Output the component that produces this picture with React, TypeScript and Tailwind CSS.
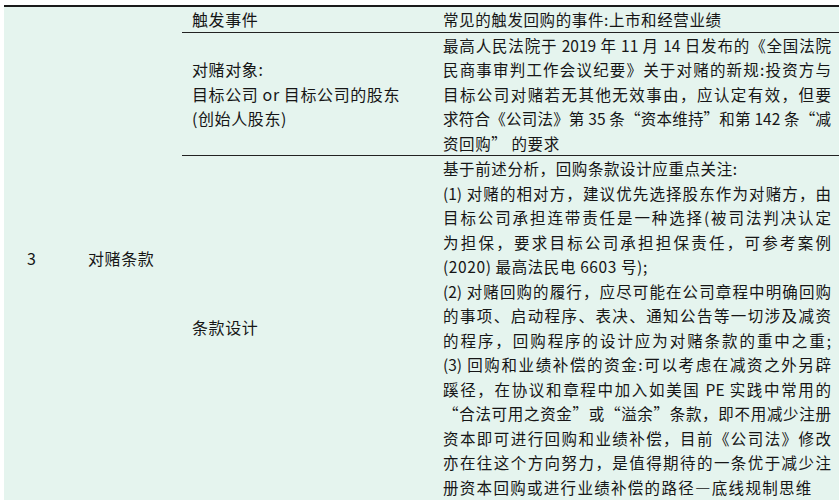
const font = { fontFamily: '"Noto Sans CJK SC", "Liberation Sans", sans-serif' };

type Line = { text: string; full?: boolean; wide?: boolean };

const objectLines: Line[] = [
  { text: '最高人民法院于 2019 年 11 月 14 日发布的《全国法院', full: true },
  { text: '民商事审判工作会议纪要》关于对赌的新规:投资方与', full: true },
  { text: '目标公司对赌若无其他无效事由，应认定有效，但要', full: true },
  { text: '求符合《公司法》第 35 条“资本维持”和第 142 条“减', full: true },
  { text: '资回购” 的要求' },
];

const designLines: Line[] = [
  { text: '基于前述分析，回购条款设计应重点关注:' },
  { text: '(1) 对赌的相对方，建议优先选择股东作为对赌方，由', full: true },
  { text: '目标公司承担连带责任是一种选择(被司法判决认定', full: true },
  { text: '为担保，要求目标公司承担担保责任，可参考案例', full: true },
  { text: '(2020) 最高法民电 6603 号);' },
  { text: '(2) 对赌回购的履行，应尽可能在公司章程中明确回购', full: true },
  { text: '的事项、启动程序、表决、通知公告等一切涉及减资', full: true },
  { text: '的程序，回购程序的设计应为对赌条款的重中之重;', full: true },
  { text: '(3) 回购和业绩补偿的资金:可以考虑在减资之外另辟', full: true },
  { text: '蹊径，在协议和章程中加入如美国 PE 实践中常用的', full: true },
  { text: '“合法可用之资金”或“溢余”条款，即不用减少注册', full: true },
  { text: '资本即可进行回购和业绩补偿，目前《公司法》修改', full: true },
  { text: '亦在往这个方向努力，是值得期待的一条优于减少注', full: true },
  { text: '册资本回购或进行业绩补偿的路径—底线规制思维', wide: true },
];

const Lines = ({ lines }: { lines: Line[] }) => (
  <div>
    {lines.map((l, i) => (
      <div
        key={i}
        className={
          l.full
            ? 'whitespace-nowrap text-justify [text-align-last:justify]'
            : l.wide
            ? 'whitespace-nowrap tracking-[1.3px]'
            : 'whitespace-nowrap tracking-[0.6px]'
        }
      >
        {l.text}
      </div>
    ))}
  </div>
);

export default function App() {
  return (
    <div
      lang="zh-CN"
      className="h-[500px] w-[839px] overflow-hidden bg-white pl-[4px] pt-[5px] text-[16px] leading-[24.5px] tracking-[0.6px] text-[#161616]"
      style={font}
    >
      <div className="flex border-t-2 border-[#1a1a1a] bg-[#e5f4ee]">
        <div className="flex w-[84px] shrink-0 items-center pl-[23px]">3</div>
        <div className="flex w-[94px] shrink-0 items-center">对赌条款</div>
        <div className="flex flex-1 flex-col">
          <div className="flex">
            <div className="w-[260px] shrink-0 pl-[10px]">触发事件</div>
            <div className="flex-1 pl-[1px] text-[15.5px]">常见的触发回购的事件:上市和经营业绩</div>
          </div>
          <div className="flex border-t-[1.5px] border-[#222]">
            <div className="flex w-[260px] shrink-0 flex-col justify-center pl-[10px]">
              <div>对赌对象:</div>
              <div className="whitespace-nowrap">目标公司 or 目标公司的股东</div>
              <div>(创始人股东)</div>
            </div>
            <div className="w-[389px] pl-[1px] text-[15.5px] tracking-normal">
              <Lines lines={objectLines} />
            </div>
          </div>
          <div className="flex border-t-[1.5px] border-[#222] pb-[10px]">
            <div className="flex w-[260px] shrink-0 items-center pl-[10px]">条款设计</div>
            <div className="w-[389px] pl-[1px] text-[15.5px] tracking-normal">
              <Lines lines={designLines} />
            </div>
          </div>
        </div>
      </div>
    </div>
  );
}
